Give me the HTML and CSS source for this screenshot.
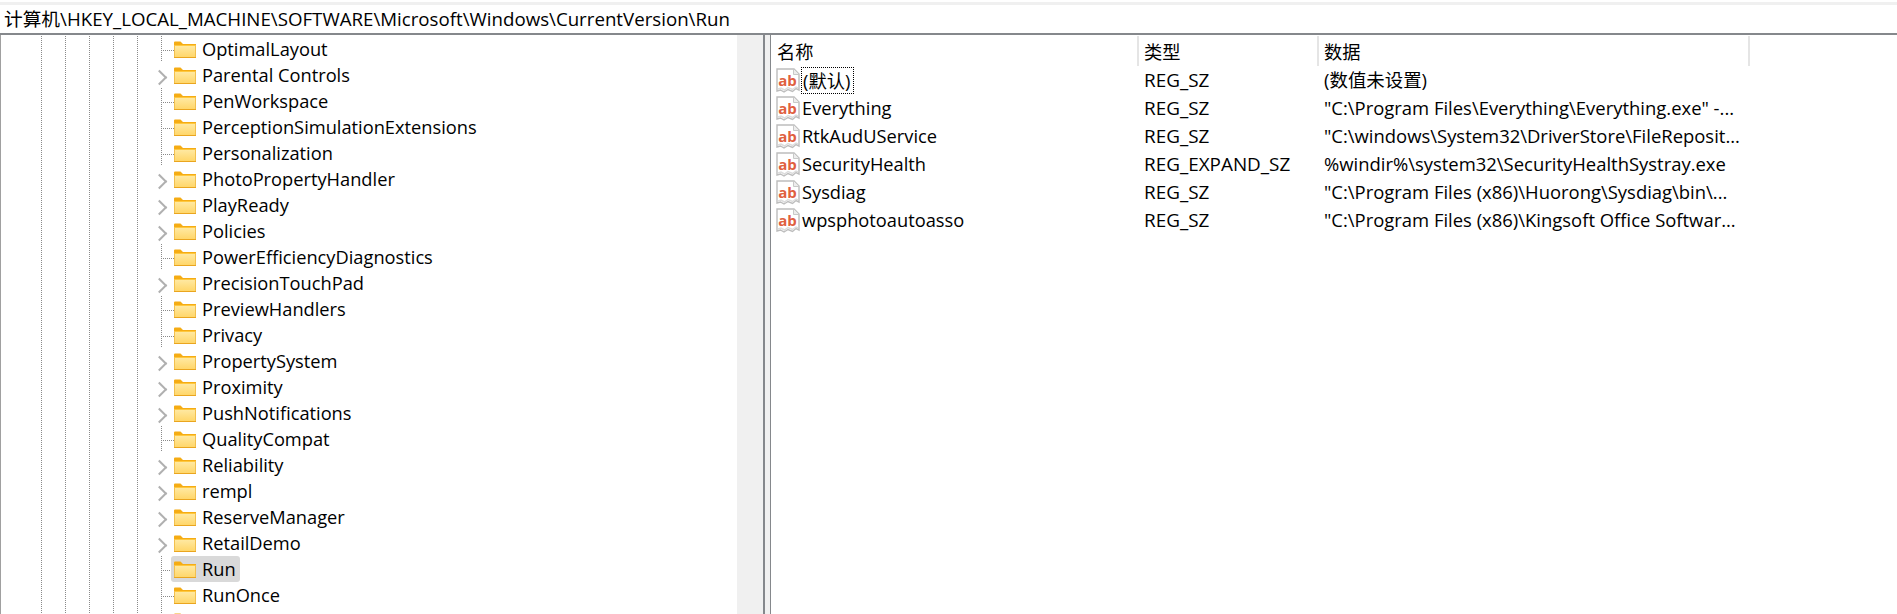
FILE: index.html
```html
<!DOCTYPE html>
<html lang="zh">
<head>
<meta charset="utf-8">
<title>注册表编辑器</title>
<link rel="stylesheet" href="styles.css">
</head>
<body>
<svg class="defs" width="0" height="0" aria-hidden="true">
  <defs>
    <linearGradient id="fg" x1="0" y1="0" x2="0" y2="1">
      <stop offset="0" stop-color="#ffeaa6"/>
      <stop offset="1" stop-color="#ffd565"/>
    </linearGradient>
    <symbol id="folder" viewBox="0 0 22 17">
      <path d="M0 1.5Q0 0.5 1 0.5H6.5L9 3H22V4.5H0Z" fill="#f5ac14"/>
      <path d="M0 4H22V17H0Z" fill="url(#fg)"/>
      <path d="M0 4.5H22" stroke="#ffc83d" stroke-width="1"/>
      <path d="M0 16.5H22" stroke="#eaa51f" stroke-width="1"/>
      <path d="M.5 4V16M21.5 4V16" stroke="#f2c04e" stroke-width="1"/>
    </symbol>
    <symbol id="ab" viewBox="0 0 24 25">
      <path d="M1 1H18L23 6V22L20 20.5L16.5 23.5L12 21.5L8 24L4.5 22L1 23Z" fill="#fff" stroke="#bdbdbd" stroke-width="1.4"/>
      <path d="M17.5 1V6.5H23" fill="#ededed" stroke="#c8c8c8"/>
      <path d="M2 21L5 20L8.500 22L12 19.500L16.500 21.500L20 19L22 20" fill="none" stroke="#dcdcdc" stroke-width="1.500"/>
      <text x="11.500" y="17.500" text-anchor="middle" class="ab-text">ab</text>
    </symbol>
  </defs>
</svg>
<div class="topline"></div>
<div class="address">计算机\HKEY_LOCAL_MACHINE\SOFTWARE\Microsoft\Windows\CurrentVersion\Run</div>
<main class="panes">
  <section class="tree-pane">
    <ul class="tree">
      <li class="node"><i class="indent"></i><i class="elbow"></i><span class="item"><svg class="folder"><use href="#folder"/></svg><span>OptimalLayout</span></span></li>
      <li class="node"><i class="indent"></i><i class="chevron"></i><span class="item"><svg class="folder"><use href="#folder"/></svg><span>Parental Controls</span></span></li>
      <li class="node"><i class="indent"></i><i class="elbow"></i><span class="item"><svg class="folder"><use href="#folder"/></svg><span>PenWorkspace</span></span></li>
      <li class="node"><i class="indent"></i><i class="elbow"></i><span class="item"><svg class="folder"><use href="#folder"/></svg><span>PerceptionSimulationExtensions</span></span></li>
      <li class="node"><i class="indent"></i><i class="elbow"></i><span class="item"><svg class="folder"><use href="#folder"/></svg><span>Personalization</span></span></li>
      <li class="node"><i class="indent"></i><i class="chevron"></i><span class="item"><svg class="folder"><use href="#folder"/></svg><span>PhotoPropertyHandler</span></span></li>
      <li class="node"><i class="indent"></i><i class="chevron"></i><span class="item"><svg class="folder"><use href="#folder"/></svg><span>PlayReady</span></span></li>
      <li class="node"><i class="indent"></i><i class="chevron"></i><span class="item"><svg class="folder"><use href="#folder"/></svg><span>Policies</span></span></li>
      <li class="node"><i class="indent"></i><i class="elbow"></i><span class="item"><svg class="folder"><use href="#folder"/></svg><span>PowerEfficiencyDiagnostics</span></span></li>
      <li class="node"><i class="indent"></i><i class="chevron"></i><span class="item"><svg class="folder"><use href="#folder"/></svg><span>PrecisionTouchPad</span></span></li>
      <li class="node"><i class="indent"></i><i class="elbow"></i><span class="item"><svg class="folder"><use href="#folder"/></svg><span>PreviewHandlers</span></span></li>
      <li class="node"><i class="indent"></i><i class="elbow"></i><span class="item"><svg class="folder"><use href="#folder"/></svg><span>Privacy</span></span></li>
      <li class="node"><i class="indent"></i><i class="chevron"></i><span class="item"><svg class="folder"><use href="#folder"/></svg><span>PropertySystem</span></span></li>
      <li class="node"><i class="indent"></i><i class="chevron"></i><span class="item"><svg class="folder"><use href="#folder"/></svg><span>Proximity</span></span></li>
      <li class="node"><i class="indent"></i><i class="chevron"></i><span class="item"><svg class="folder"><use href="#folder"/></svg><span>PushNotifications</span></span></li>
      <li class="node"><i class="indent"></i><i class="elbow"></i><span class="item"><svg class="folder"><use href="#folder"/></svg><span>QualityCompat</span></span></li>
      <li class="node"><i class="indent"></i><i class="chevron"></i><span class="item"><svg class="folder"><use href="#folder"/></svg><span>Reliability</span></span></li>
      <li class="node"><i class="indent"></i><i class="chevron"></i><span class="item"><svg class="folder"><use href="#folder"/></svg><span>rempl</span></span></li>
      <li class="node"><i class="indent"></i><i class="chevron"></i><span class="item"><svg class="folder"><use href="#folder"/></svg><span>ReserveManager</span></span></li>
      <li class="node"><i class="indent"></i><i class="chevron"></i><span class="item"><svg class="folder"><use href="#folder"/></svg><span>RetailDemo</span></span></li>
      <li class="node"><i class="indent"></i><i class="elbow"></i><span class="item selected"><svg class="folder"><use href="#folder"/></svg><span>Run</span></span></li>
      <li class="node"><i class="indent"></i><i class="elbow"></i><span class="item"><svg class="folder"><use href="#folder"/></svg><span>RunOnce</span></span></li>
      <li class="node"><i class="indent"></i><i class="elbow"></i><span class="item"><svg class="folder"><use href="#folder"/></svg></span></li>
    </ul>
    <div class="scrollbar"></div>
  </section>
  <div class="splitter"></div>
  <section class="list-pane">
    <div class="head">
      <div class="col-name">名称</div>
      <div class="col-type">类型</div>
      <div class="col-data">数据</div>
    </div>
    <div class="row">
      <div class="col-name"><svg class="ab"><use href="#ab"/></svg><span class="focus">(默认)</span></div>
      <div class="col-type">REG_SZ</div>
      <div class="col-data">(数值未设置)</div>
    </div>
    <div class="row">
      <div class="col-name"><svg class="ab"><use href="#ab"/></svg><span class="name">Everything</span></div>
      <div class="col-type">REG_SZ</div>
      <div class="col-data">"C:\Program Files\Everything\Everything.exe" -...</div>
    </div>
    <div class="row">
      <div class="col-name"><svg class="ab"><use href="#ab"/></svg><span class="name">RtkAudUService</span></div>
      <div class="col-type">REG_SZ</div>
      <div class="col-data">"C:\windows\System32\DriverStore\FileReposit...</div>
    </div>
    <div class="row">
      <div class="col-name"><svg class="ab"><use href="#ab"/></svg><span class="name">SecurityHealth</span></div>
      <div class="col-type">REG_EXPAND_SZ</div>
      <div class="col-data">%windir%\system32\SecurityHealthSystray.exe</div>
    </div>
    <div class="row">
      <div class="col-name"><svg class="ab"><use href="#ab"/></svg><span class="name">Sysdiag</span></div>
      <div class="col-type">REG_SZ</div>
      <div class="col-data">"C:\Program Files (x86)\Huorong\Sysdiag\bin\...</div>
    </div>
    <div class="row">
      <div class="col-name"><svg class="ab"><use href="#ab"/></svg><span class="name">wpsphotoautoasso</span></div>
      <div class="col-type">REG_SZ</div>
      <div class="col-data">"C:\Program Files (x86)\Kingsoft Office Softwar...</div>
    </div>
  </section>
</main>
</body>
</html>
```
FILE: styles.css
```css
* { box-sizing: border-box; }
html, body { margin: 0; height: 100%; overflow: hidden; }
body {
  background: #fff;
  color: #000;
  font: 18.25px/26px "Open Sans", "Noto Sans CJK SC", sans-serif;
  display: flex;
  flex-direction: column;
  padding-top: 2px;
}
.defs { position: absolute; }
.ab-text { font: 700 15px "Open Sans", sans-serif; fill: #e0603f; }
.topline { height: 3px; background: #f0f0f0; flex: none; }
.address {
  flex: none;
  height: 30px;
  padding-left: 4px;
  font-size: 18.7px;
  line-height: 28px;
  border-bottom: 2px solid #85888c;
  white-space: nowrap;
}
.panes { flex: 1; display: flex; min-height: 0; }
.tree-pane { flex: none; width: 763px; display: flex; border-left: 1px solid #a0a0a0; }
.tree { flex: 1; margin: 1px 0 0; padding: 0; list-style: none; overflow: hidden; }
.node { display: flex; align-items: center; height: 26px; white-space: nowrap; }
.indent {
  flex: none;
  align-self: stretch;
  width: 160px;
  background:
    repeating-linear-gradient(#8a8a8a 0 1px, transparent 1px 2px) 40px 0 / 1px 100% no-repeat,
    repeating-linear-gradient(#8a8a8a 0 1px, transparent 1px 2px) 64px 0 / 1px 100% no-repeat,
    repeating-linear-gradient(#8a8a8a 0 1px, transparent 1px 2px) 88px 0 / 1px 100% no-repeat,
    repeating-linear-gradient(#8a8a8a 0 1px, transparent 1px 2px) 112px 0 / 1px 100% no-repeat,
    repeating-linear-gradient(#8a8a8a 0 1px, transparent 1px 2px) 136px 0 / 1px 100% no-repeat;
}
.elbow, .chevron { flex: none; align-self: stretch; width: 13px; display: block; }
.elbow {
  background:
    repeating-linear-gradient(#8a8a8a 0 1px, transparent 1px 2px) 0 0 / 1px 100% no-repeat,
    repeating-linear-gradient(90deg, #8a8a8a 0 1px, transparent 1px 2px) 0 14px / 100% 1px no-repeat;
}
.chevron::before {
  content: "";
  display: block;
  margin: 10px 0 0 -7px;
  width: 9px;
  height: 9px;
  border-top: 2px solid #b0b0b0;
  border-right: 2px solid #b0b0b0;
  transform: rotate(45deg);
}
.item { display: flex; align-items: center; height: 26px; }
.folder { flex: none; width: 22px; height: 17px; margin-right: 6px; }
.selected {
  background: #d9d9d9;
  border-radius: 3px;
  margin-left: -3px;
  padding: 0 4px 0 3px;
}
.scrollbar { flex: none; width: 26px; background: #f0f0f0; }
.splitter {
  flex: none;
  width: 8px;
  background: #f0f0f0;
  border-left: 2px solid #85888c;
  border-right: 1px solid #85888c;
}
.list-pane { flex: 1; min-width: 0; padding-top: 1px; }
.head { display: flex; height: 30px; align-items: center; }
.row { display: flex; height: 28px; align-items: center; }
.col-name { flex: none; width: 368px; padding-left: 5px; display: flex; align-items: center; }
.col-type { flex: none; width: 180px; padding-left: 5px; font-size: 18.9px; }
.col-data { flex: none; width: 431px; padding-left: 5px; font-size: 18.45px; white-space: nowrap; overflow: hidden; }
.head .col-name, .head .col-type, .head .col-data {
  height: 30px;
  padding-top: 2px;
  font-size: 18.25px;
  line-height: 28px;
  border-right: 2px solid #e5e5e5;
}
.head .col-name { padding-left: 6px; }
.ab { flex: none; width: 24px; height: 25px; margin-right: 1px; }
.focus { outline: 1px dotted #000; outline-offset: -1px; padding: 0 4px 0 2px; line-height: 27px; }
.name { margin-left: 1px; }
```
